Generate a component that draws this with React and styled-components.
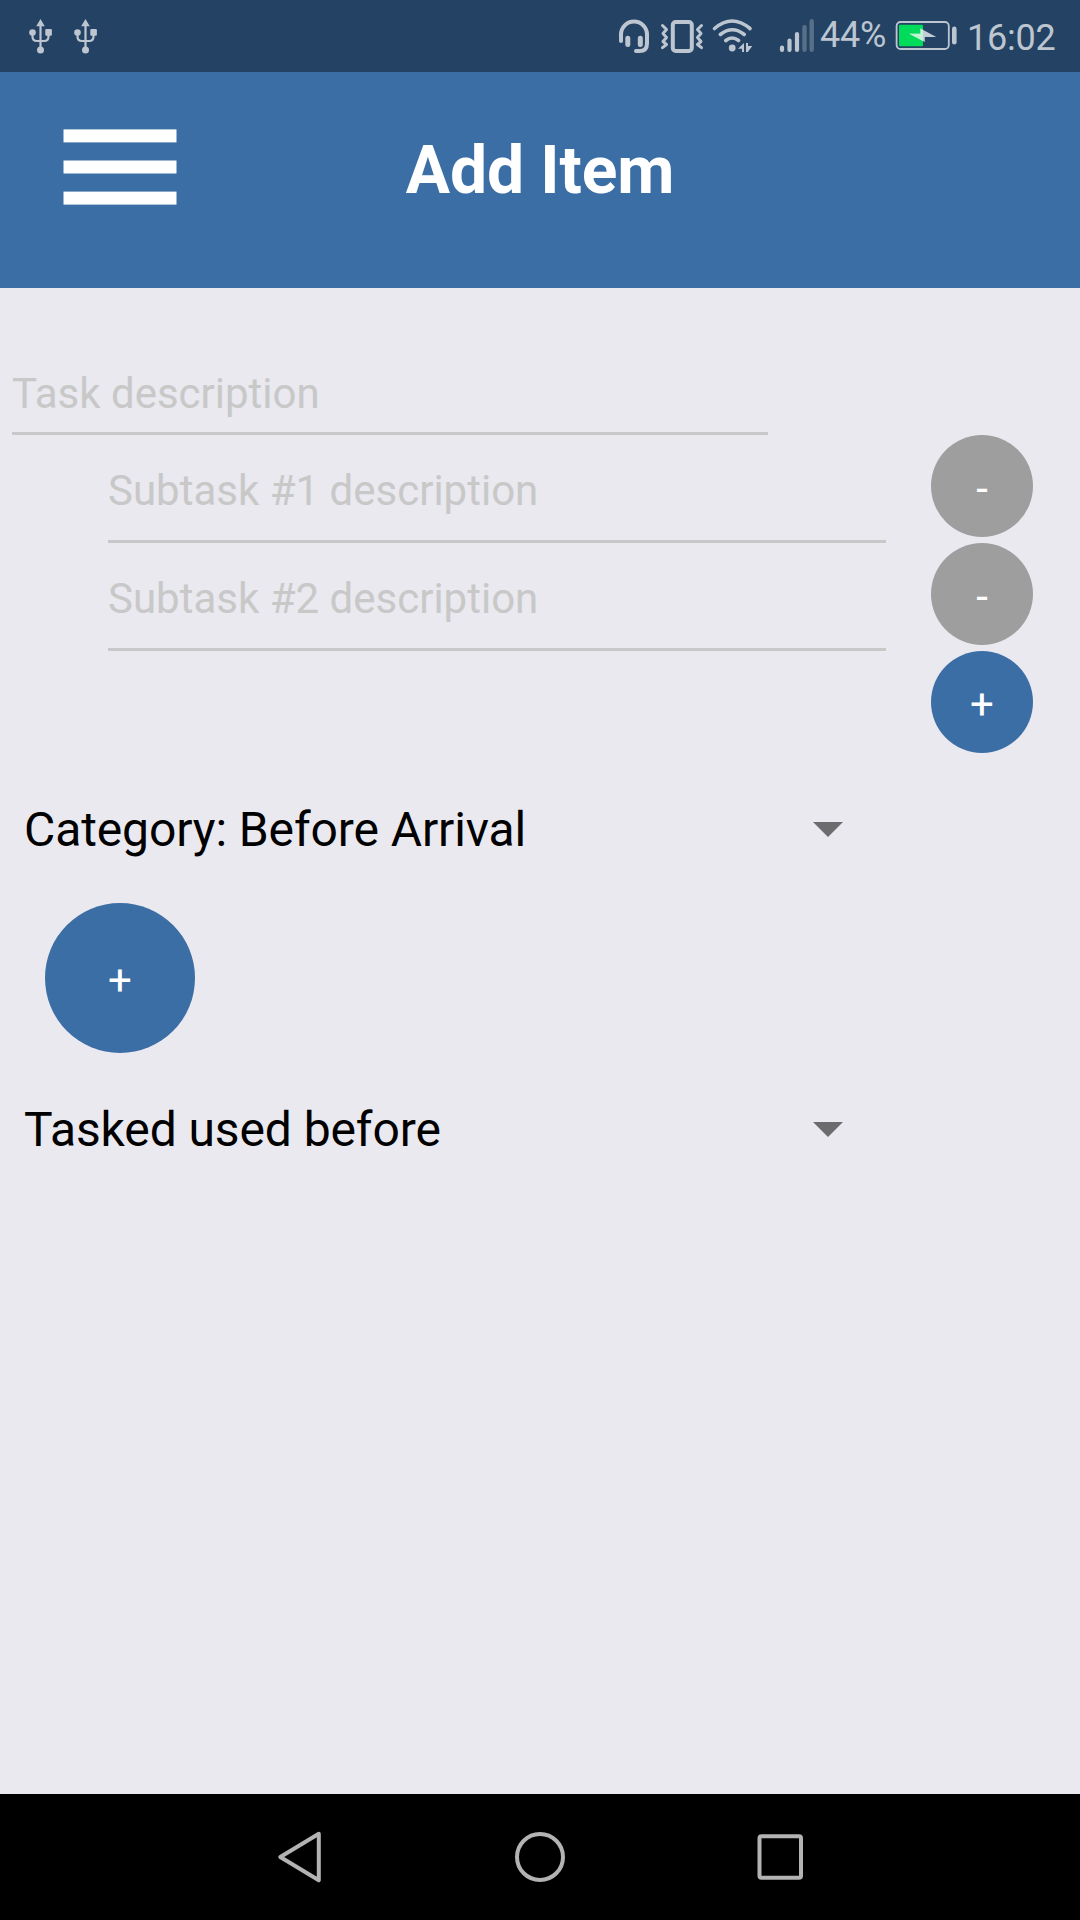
import React from "react";
import styled, { createGlobalStyle } from "styled-components";

const GlobalStyle = createGlobalStyle`
  *, *::before, *::after { box-sizing: border-box; }
  body { margin: 0; background: #e9e9ef; }
  svg { display: block; flex: none; }
`;

const Screen = styled.div`
  width: 1080px;
  height: 1920px;
  display: flex;
  flex-direction: column;
  background: #e9e9ef;
  font-family: Roboto, "Noto Sans", sans-serif;
  overflow: hidden;
`;

const StatusBar = styled.header`
  height: 72px;
  flex: none;
  display: flex;
  justify-content: space-between;
  padding-left: 15px;
  background: #244263;
  color: #bdc6d0;
`;

const StatusGroup = styled.div`
  display: flex;
  align-items: flex-start;
`;

const StatusText = styled.span`
  font-size: 36px;
  line-height: 42px;
  letter-spacing: -0.2px;
  padding-top: ${(p) => p.$top}px;
  width: ${(p) => p.$width}px;
  white-space: nowrap;
`;

const AppBar = styled.div`
  height: 216px;
  flex: none;
  display: grid;
  grid-template-columns: 240px 1fr 240px;
  background: #3b6ea5;
`;

const MenuButton = styled.button`
  border: 0;
  padding: 0;
  background: none;
  height: 216px;
`;

const Title = styled.h1`
  margin: 0;
  padding-top: 59px;
  color: #fff;
  font-size: 66px;
  line-height: 80px;
  font-weight: 700;
  letter-spacing: -0.1px;
  text-align: center;
`;

const Content = styled.main`
  flex: 1;
  display: flex;
  flex-direction: column;
  padding-top: 66px;
`;

const Field = styled.div`
  width: ${(p) => p.$width}px;
  height: ${(p) => p.$height}px;
  margin-left: ${(p) => p.$indent}px;
  padding-top: ${(p) => p.$top}px;
  border-bottom: 3px solid #c8c8c8;
  color: #c8c8c8;
  font-size: 42px;
  line-height: 50px;
  white-space: nowrap;
`;

const SubtaskRow = styled.div`
  height: 108px;
  display: flex;
  justify-content: space-between;
  padding-right: 47px;
`;

const RoundButton = styled.button`
  width: ${(p) => p.$size}px;
  height: ${(p) => p.$size}px;
  flex: none;
  border: 0;
  border-radius: 50%;
  padding: 6px 0 0;
  background: ${(p) => (p.$muted ? "#9e9e9e" : "#3b6ea5")};
  color: #fff;
  font-family: inherit;
  font-size: 42px;
  line-height: 50px;
  text-align: center;
`;

const AddSubtaskRow = styled.div`
  display: flex;
  justify-content: flex-end;
  padding-right: 47px;
`;

const Picker = styled.div`
  height: 150px;
  width: 843px;
  padding: 4px 0 0 24px;
  display: flex;
  align-items: center;
  justify-content: space-between;
  color: #000;
  font-size: 48px;
  line-height: 56px;
  letter-spacing: -0.1px;
  white-space: nowrap;
`;

const CategoryAdd = styled.div`
  height: 150px;
  padding-left: 45px;
`;

const NavBar = styled.nav`
  height: 126px;
  flex: none;
  display: flex;
  justify-content: center;
  background: #000;
`;

const NavButton = styled.button`
  width: 240px;
  border: 0;
  padding: 0;
  background: none;
`;

const UsbIcon = () => (
  <svg width="45" height="72" viewBox="0 0 45 72" fill="#bdc6d0">
    <path d="M25.5 19l4.3 7.3h-8.6z" />
    <path d="M25.5 24v26M17.5 33v3.5q0 4.5 4.5 4.5h7q4.5 0 4.5-4.5V33" fill="none" stroke="#bdc6d0" strokeWidth="2.2" />
    <circle cx="17.5" cy="32.5" r="3.3" />
    <rect x="30.3" y="29" width="6.6" height="6.8" rx="1" />
    <circle cx="25.5" cy="50" r="3.5" />
  </svg>
);

const SignalIcons = () => (
  <svg width="205" height="72" viewBox="615 0 205 72" fill="none" stroke="#bdc6d0" strokeLinecap="round">
    <path d="M621 41v-6.500a13 13 0 0 1 26 0v9q0 7.500-7.500 7.500H636" strokeWidth="4" />
    <path d="M627.800 38.200v6.300M640.300 38.200v6.300" strokeWidth="5" />
    <rect x="672.800" y="22" width="19" height="29" rx="3" strokeWidth="4" />
    <path d="M662.500 25.500l4 4-3.500 4 3.500 4-3.500 4 3.500 3-4 3.200M701.500 25.500l-4 4 3.500 4-3.500 4 3.500 4-3.500 3 4 3.200" strokeWidth="3" strokeLinejoin="round" />
    <path d="M714.500 28.500q17.500-15 35.500 0M720.300 34.500q12-9.500 24 0M725.800 40.500q6.200-5 12.800 0" strokeWidth="3.600" />
    <circle cx="732.200" cy="48" r="3.400" fill="#bdc6d0" stroke="none" />
    <path d="M744 43v9h-2v-3.300h-4zM746 43h2v3h4.300l-4.500 6H746z" fill="#bdc6d0" stroke="none" />
    <path d="M782 47.500v2.500M789.500 40.500v9.500M797 34v16" strokeWidth="4.200" />
    <path d="M804.500 27.200v22.600M811.700 21.200v28.600" stroke="#586f88" strokeWidth="4.400" />
  </svg>
);

const BatteryIcon = () => (
  <svg width="74" height="72" viewBox="893 0 74 72">
    <rect x="896.600" y="22" width="52.200" height="27" rx="4" fill="none" stroke="#bdc6d0" strokeWidth="1.800" />
    <rect x="899" y="24.800" width="24" height="21.400" rx="1" fill="#00dc5a" />
    <rect x="952" y="26.600" width="4.600" height="18" rx="2.300" fill="#bdc6d0" />
    <path d="M909.300 33.700h11.200v-5.200l15.800 8.600h-11.500v4.800z" fill="#c3ccd6" />
    <path d="M909.300 33.700h11.200v-5.200l2.500 1.400v11.100z" fill="#bdf5d4" />
  </svg>
);

const MenuIcon = () => (
  <svg width="240" height="216" viewBox="0 72 240 216" fill="#fff">
    <rect x="63.500" y="129.400" width="113" height="13" />
    <rect x="63.500" y="160.500" width="113" height="13" />
    <rect x="63.500" y="191.600" width="113" height="13" />
  </svg>
);

const Caret = () => (
  <svg width="30" height="16" viewBox="0 0 30 16">
    <path d="M0 0h30L15 15z" fill="#6c6b6e" />
  </svg>
);

const navShapes = [
  { name: "Back", shape: <path d="M118.800 39.700L80.300 63 118.800 86.300z" transform="translate(20 0)" /> },
  { name: "Home", shape: <circle cx="120" cy="63" r="23" /> },
  { name: "Recents", shape: <rect x="99.500" y="42.300" width="41.500" height="41.500" rx="2" /> },
];

const subtasks = ["Subtask #1 description", "Subtask #2 description"];

export default function App() {
  return (
    <Screen>
      <GlobalStyle />
      <StatusBar>
        <StatusGroup>
          <UsbIcon />
          <UsbIcon />
        </StatusGroup>
        <StatusGroup>
          <SignalIcons />
          <StatusText $top={14} $width={73}>44%</StatusText>
          <BatteryIcon />
          <StatusText $top={17} $width={113}>16:02</StatusText>
        </StatusGroup>
      </StatusBar>
      <AppBar>
        <MenuButton aria-label="Menu"><MenuIcon /></MenuButton>
        <Title>Add Item</Title>
      </AppBar>
      <Content>
        <Field $width={756} $height={81} $indent={12} $top={15}>Task description</Field>
        {subtasks.map((text) => (
          <SubtaskRow key={text}>
            <Field $width={778} $height={108} $indent={108} $top={31}>{text}</Field>
            <RoundButton $size={102} $muted>-</RoundButton>
          </SubtaskRow>
        ))}
        <AddSubtaskRow>
          <RoundButton $size={102}>+</RoundButton>
        </AddSubtaskRow>
        <Picker>
          Category: Before Arrival
          <Caret />
        </Picker>
        <CategoryAdd>
          <RoundButton $size={150}>+</RoundButton>
        </CategoryAdd>
        <Picker>
          Tasked used before
          <Caret />
        </Picker>
      </Content>
      <NavBar>
        {navShapes.map(({ name, shape }) => (
          <NavButton key={name} aria-label={name}>
            <svg width="240" height="126" viewBox="0 0 240 126" fill="none" stroke="#b3b3b3" strokeWidth="4" strokeLinejoin="round">
              {shape}
            </svg>
          </NavButton>
        ))}
      </NavBar>
    </Screen>
  );
}
